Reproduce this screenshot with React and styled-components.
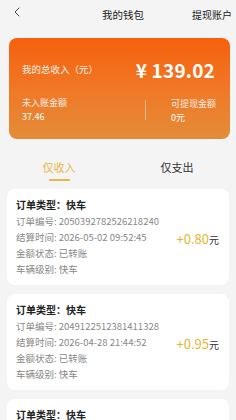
import React from 'react';
import styled, { createGlobalStyle } from 'styled-components';

const GlobalStyle = createGlobalStyle`
  html, body {
    margin: 0;
    padding: 0;
    background: #f4f4f4;
    font-family: "Noto Sans CJK SC", "Noto Sans", sans-serif;
  }
`;

const Page = styled.div`
  width: 236px;
  height: 420px;
  overflow: hidden;
  background: #f4f4f4;
`;

const Header = styled.div`
  height: 28px;
  display: grid;
  grid-template-columns: 1fr auto 1fr;
  align-items: center;
  padding: 0 4px 0 14px;
  color: #222;
`;

const Back = styled.svg`
  justify-self: start;
  margin-top: -4px;
`;

const Title = styled.span`
  font-size: 10.5px;
  color: #222;
`;

const HeaderLink = styled.span`
  justify-self: end;
  font-size: 10px;
  color: #222;
`;

const IncomeCard = styled.div`
  margin: 10px 6px 0 9px;
  height: 101px;
  border-radius: 8px;
  background: linear-gradient(180deg, #f6600d 0%, #ef7a28 55%, #e38c38 100%);
  color: #fff;
  padding: 20px 15px 0 13px;
  box-sizing: border-box;
  display: flex;
  flex-direction: column;
`;

const TotalRow = styled.div`
  display: flex;
  justify-content: space-between;
  align-items: center;
  height: 22px;
`;

const TotalLabel = styled.span`
  font-size: 9.5px;
  opacity: 0.92;
`;

const TotalValue = styled.span`
  font-size: 19px;
  font-weight: 700;
  letter-spacing: 0.2px;
`;

const SubRow = styled.div`
  display: flex;
  justify-content: space-between;
  align-items: center;
  margin-top: 15px;
`;

const SubCol = styled.div`
  display: flex;
  flex-direction: column;
  gap: 2px;
  width: ${(p) => p.$width || 'auto'};
  white-space: nowrap;
  padding-top: ${(p) => p.$offset || 0}px;
`;

const SubLabel = styled.span`
  font-size: 9px;
  line-height: 12px;
  opacity: 0.85;
`;

const SubValue = styled.span`
  font-size: 9px;
  line-height: 12px;
`;

const Divider = styled.div`
  width: 1px;
  height: 20px;
  background: rgba(255, 255, 255, 0.45);
  margin-left: 4px;
`;

const Tabs = styled.div`
  display: flex;
  height: 50px;
`;

const Tab = styled.div`
  flex: 1;
  display: flex;
  flex-direction: column;
  align-items: center;
  padding-top: 20px;
  font-size: 11px;
  line-height: 16px;
  color: ${(p) => (p.$active ? '#e9b64a' : '#333')};

  &::after {
    content: '';
    display: ${(p) => (p.$active ? 'block' : 'none')};
    width: 21px;
    height: 2px;
    border-radius: 1px;
    background: #e9b64a;
    margin-top: 4px;
  }
`;

const List = styled.div`
  display: flex;
  flex-direction: column;
  gap: 9px;
  padding: 0 7px;
`;

const OrderCard = styled.div`
  background: #fff;
  border-radius: 8px;
  padding: 8px 10px 8px 9px;
  display: flex;
  align-items: center;
  justify-content: space-between;
`;

const Info = styled.div`
  display: flex;
  flex-direction: column;
`;

const Line = styled.div`
  font-size: ${(p) => (p.$title ? 10 : 9.5)}px;
  line-height: 16px;
  color: ${(p) => (p.$title ? '#222' : '#888')};
  font-weight: ${(p) => (p.$title ? 700 : 400)};
  white-space: nowrap;
`;

const Amount = styled.div`
  font-size: 13px;
  color: #e9b530;
  white-space: nowrap;
  margin-top: 2px;

  span {
    font-size: 10px;
    color: #333;
  }
`;

const orders = [
  { no: '2050392782526218240', time: '2026-05-02 09:52:45', amount: '+0.80' },
  { no: '2049122512381411328', time: '2026-04-28 21:44:52', amount: '+0.95' },
  { no: '2048812345678901234', time: '2026-04-27 18:20:11', amount: '+0.72' },
];

const App = () => (
  <Page>
    <GlobalStyle />
    <Header>
      <Back width="6" height="10" viewBox="0 0 6 10">
        <path d="M5 1 L1 5 L5 9" fill="none" stroke="#444" strokeWidth="1" strokeLinecap="round" strokeLinejoin="round" />
      </Back>
      <Title>我的钱包</Title>
      <HeaderLink>提现账户</HeaderLink>
    </Header>
    <IncomeCard>
      <TotalRow>
        <TotalLabel>我的总收入（元）</TotalLabel>
        <TotalValue>¥ 139.02</TotalValue>
      </TotalRow>
      <SubRow>
        <SubCol $width="94px">
          <SubLabel>未入账金额</SubLabel>
          <SubValue>37.46</SubValue>
        </SubCol>
        <Divider />
        <SubCol $width="44px" $offset={3}>
          <SubLabel>可提现金额</SubLabel>
          <SubValue>0元</SubValue>
        </SubCol>
      </SubRow>
    </IncomeCard>
    <Tabs>
      <Tab $active>仅收入</Tab>
      <Tab>仅支出</Tab>
    </Tabs>
    <List>
      {orders.map((o) => (
        <OrderCard key={o.no}>
          <Info>
            <Line $title>订单类型：快车</Line>
            <Line>订单编号: {o.no}</Line>
            <Line>结算时间: {o.time}</Line>
            <Line>金额状态: 已转账</Line>
            <Line>车辆级别: 快车</Line>
          </Info>
          <Amount>
            {o.amount}
            <span>元</span>
          </Amount>
        </OrderCard>
      ))}
    </List>
  </Page>
);

export default App;
